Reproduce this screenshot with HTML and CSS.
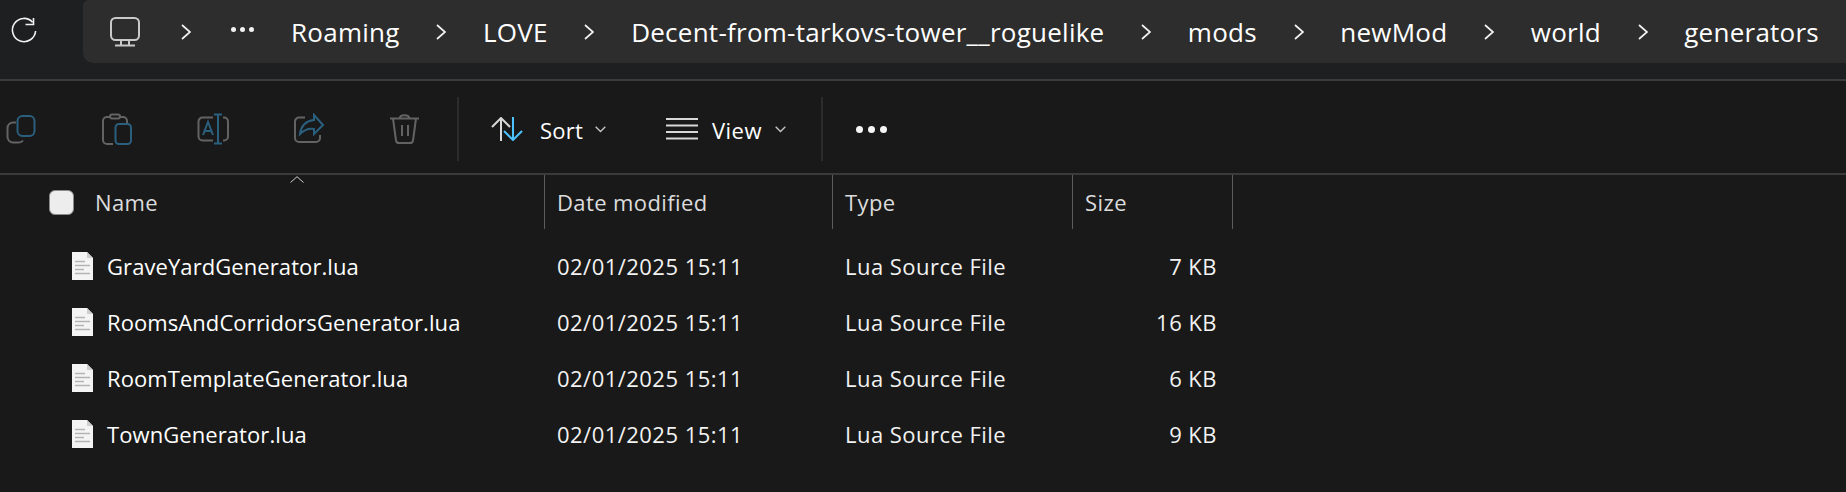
FILE: index.html
```html
<!DOCTYPE html>
<html>
	<head>
		<meta charset="UTF-8">
		<title>generators</title>
		<link rel="stylesheet" href="styles.css">
	</head>
	<body>
		<div class="topbar">
			<svg class="refresh" width="28" height="28" viewBox="0 0 28 28"><path d="M22.6 5.2A11.6 11.6 0 1 0 25.6 14" /><path d="M23.5 1v6.5H15.5" /></svg>
			<div class="crumbs">
				<svg class="monitor" width="30" height="30" viewBox="0 0 30 30"><rect x="1" y="1" width="28" height="22" rx="4.5" /><path d="M11 23v5M19 23v5M5 28.5h20" /></svg>
				<span class="chev"><svg width="10" height="16" viewBox="0 0 10 16"><path d="M1 1l8 7-8 7" /></svg></span>
				<span class="more"><i></i><i></i><i></i></span>
				<span class="crumb">Roaming</span>
				<span class="chev"><svg width="10" height="16" viewBox="0 0 10 16"><path d="M1 1l8 7-8 7" /></svg></span>
				<span class="crumb">LOVE</span>
				<span class="chev"><svg width="10" height="16" viewBox="0 0 10 16"><path d="M1 1l8 7-8 7" /></svg></span>
				<span class="crumb">Decent-from-tarkovs-tower__roguelike</span>
				<span class="chev"><svg width="10" height="16" viewBox="0 0 10 16"><path d="M1 1l8 7-8 7" /></svg></span>
				<span class="crumb">mods</span>
				<span class="chev"><svg width="10" height="16" viewBox="0 0 10 16"><path d="M1 1l8 7-8 7" /></svg></span>
				<span class="crumb">newMod</span>
				<span class="chev"><svg width="10" height="16" viewBox="0 0 10 16"><path d="M1 1l8 7-8 7" /></svg></span>
				<span class="crumb">world</span>
				<span class="chev"><svg width="10" height="16" viewBox="0 0 10 16"><path d="M1 1l8 7-8 7" /></svg></span>
				<span class="crumb">generators</span>
			</div>
		</div>

		<div class="toolbar">
			<div class="actions">
				<div class="action">
					<svg width="32" height="32" viewBox="0 0 32 32"><path class="off" d="M11 9.500H8a5.500 5.500 0 0 0-5.500 5.500V24a5.500 5.500 0 0 0 5.500 5.500h6a5 5 0 0 0 4-2" /><rect class="blue" x="12.500" y="3" width="17" height="20" rx="5" /></svg>
				</div>
				<div class="action">
					<svg width="32" height="32" viewBox="0 0 32 32"><path class="off" d="M12 31H6a4 4 0 0 1-4-4V8a4 4 0 0 1 4-4h3M19 4h3a4 4 0 0 1 4 4v2" /><rect class="off" x="9" y="1.500" width="10" height="4" rx="2" /><rect class="blue" x="14.500" y="11" width="15.500" height="20" rx="3.500" /></svg>
				</div>
				<div class="action">
					<svg width="32" height="32" viewBox="0 0 32 32"><path class="off" d="M16 4.500H5.500a4 4 0 0 0-4 4v15a4 4 0 0 0 4 4H16M26 4.500h1a4 4 0 0 1 4 4v15a4 4 0 0 1-4 4h-1" /><path class="blue" d="M21 2v28M17 1.500h8M17 30.500h8M6 22l5-13 5 13M7.700 18h6.600" /></svg>
				</div>
				<div class="action">
					<svg width="32" height="32" viewBox="0 0 32 32"><path class="off" d="M12 4.500H6a4 4 0 0 0-4 4V25a4 4 0 0 0 4 4h17a4 4 0 0 0 4-4v-3" /><path class="blue" d="M21 2l9 10-9 9v-5c-6-1-10 1-14 5 1-8 6-13 14-14z" /></svg>
				</div>
				<div class="action">
					<svg width="32" height="32" viewBox="0 0 32 32"><path class="off" d="M1 5.500h29M10.500 5.500C11 1 20 1 20.500 5.500M4 5.500l3 22a3 3 0 0 0 3 2.500h11a3 3 0 0 0 3-2.500l3-22M13 12v11M19 12v11" /></svg>
				</div>
			</div>
			<div class="sep"></div>
			<div class="tool tool-sort">
				<svg class="tool-icon" width="32" height="24" viewBox="0 0 32 24"><path class="up" d="M10 24V1M1 10l9-9 9 9" /><path class="down" d="M22 0v23M13 14l9 9 9-9" /></svg>
				<span class="tool-label">Sort</span>
				<svg class="caret" width="11" height="7" viewBox="0 0 11 7"><path d="M.7.700l4.800 4.800L10.300.700" /></svg>
			</div>
			<div class="tool tool-view">
				<svg class="tool-icon" width="32" height="22" viewBox="0 0 32 22"><path class="up" d="M0 1h32M0 7.500h32M0 14h32M0 20.500h32" /></svg>
				<span class="tool-label">View</span>
				<svg class="caret" width="11" height="7" viewBox="0 0 11 7"><path d="M.7.700l4.800 4.800L10.300.700" /></svg>
			</div>
			<div class="sep"></div>
			<div class="dots"><i></i><i></i><i></i></div>
		</div>

		<div class="list">
			<div class="row head">
				<div class="cell-name">
					<span class="check"></span>
					<span>Name</span>
					<svg class="sort-mark" width="14" height="7" viewBox="0 0 14 7"><path d="M.5 6.500L7 .7l6.500 5.800" /></svg>
				</div>
				<div class="cell">Date modified</div>
				<div class="cell">Type</div>
				<div class="cell">Size</div>
			</div>

			<div class="row file">
				<div class="cell-file"><svg class="doc" width="21" height="28" viewBox="0 0 21 28"><path class="page" d="M0 0h15l6 6v22H0z" /><path class="fold" d="M15 0l6 6h-6z" /><path class="lines" d="M3 9.500h10M3 13.500h15M3 17.500h9M3 21.500h15" /></svg>GraveYardGenerator.lua</div>
				<div class="cell">02/01/2025 15:11</div>
				<div class="cell">Lua Source File</div>
				<div class="cell size">7 KB</div>
			</div>
			<div class="row file">
				<div class="cell-file"><svg class="doc" width="21" height="28" viewBox="0 0 21 28"><path class="page" d="M0 0h15l6 6v22H0z" /><path class="fold" d="M15 0l6 6h-6z" /><path class="lines" d="M3 9.500h10M3 13.500h15M3 17.500h9M3 21.500h15" /></svg>RoomsAndCorridorsGenerator.lua</div>
				<div class="cell">02/01/2025 15:11</div>
				<div class="cell">Lua Source File</div>
				<div class="cell size">16 KB</div>
			</div>
			<div class="row file">
				<div class="cell-file"><svg class="doc" width="21" height="28" viewBox="0 0 21 28"><path class="page" d="M0 0h15l6 6v22H0z" /><path class="fold" d="M15 0l6 6h-6z" /><path class="lines" d="M3 9.500h10M3 13.500h15M3 17.500h9M3 21.500h15" /></svg>RoomTemplateGenerator.lua</div>
				<div class="cell">02/01/2025 15:11</div>
				<div class="cell">Lua Source File</div>
				<div class="cell size">6 KB</div>
			</div>
			<div class="row file">
				<div class="cell-file"><svg class="doc" width="21" height="28" viewBox="0 0 21 28"><path class="page" d="M0 0h15l6 6v22H0z" /><path class="fold" d="M15 0l6 6h-6z" /><path class="lines" d="M3 9.500h10M3 13.500h15M3 17.500h9M3 21.500h15" /></svg>TownGenerator.lua</div>
				<div class="cell">02/01/2025 15:11</div>
				<div class="cell">Lua Source File</div>
				<div class="cell size">9 KB</div>
			</div>
		</div>
	</body>
</html>
```

FILE: styles.css
```css
* {margin: 0; padding: 0; box-sizing: border-box;}
html, body {height: 100%; overflow: hidden;}
body {
	background: #191919;
	color: #fff;
	font-family: "Open Sans", "Noto Sans", sans-serif;
}
svg {display: block; fill: none;}

/* address bar */
.topbar {
	height: 81px;
	background: #1e1f20;
	border-bottom: 2px solid #3b3b3b;
	display: flex;
	align-items: flex-start;
	padding-left: 10px;
}
.refresh {
	margin-top: 17px;
	stroke: #f2f2f2;
	stroke-width: 1.6;
}
.crumbs {
	flex: 1;
	height: 63px;
	margin-left: 45px;
	padding-left: 27px;
	background: #2d2d2d;
	border-radius: 6px 0 0 10px;
	display: flex;
	align-items: center;
	gap: 36.700px;
	white-space: nowrap;
}
.monitor {
	stroke: #c9c9c9;
	stroke-width: 2;
	margin-right: 4px;
}
.chev svg {
	stroke: #f2f2f2;
	stroke-width: 1.7;
}
.more {
	display: flex;
	gap: 4px;
	margin: 0 0 5px 4px;
}
.more i {
	width: 5px;
	height: 5px;
	border-radius: 50%;
	background: #f2f2f2;
}
.crumb {
	font-size: 26px;
	letter-spacing: 0.25px;
	line-height: 30px;
}

/* command bar */
.toolbar {
	height: 94px;
	padding-top: 4px;
	border-bottom: 2px solid #3b3b3b;
	display: flex;
	align-items: center;
}
.actions {
	display: flex;
	margin-left: -27px;
}
.action {
	width: 96px;
	display: flex;
	justify-content: center;
}
.off {
	stroke: #636363;
	stroke-width: 2;
}
.blue {
	stroke: #2b5f7e;
	stroke-width: 2;
}
.sep {
	width: 2px;
	height: 64px;
	background: #2c2c2c;
	margin-left: 4px;
}
.tool {
	display: flex;
	align-items: center;
}
.tool-sort {margin-left: 32px;}
.tool-view {margin-left: 60px;}
.tool-view + .sep {margin-left: 35px;}
.tool-label {
	font-size: 22px;
	letter-spacing: 0.2px;
	margin-left: 17px;
	line-height: 30px;
	padding-top: 2px;
}
.tool-view .tool-label {
	margin-left: 14px;
	letter-spacing: 0.5px;
}
.caret {
	stroke: #c4c4c4;
	stroke-width: 1.4;
	margin-left: 12px;
}
.tool-view .caret {margin-left: 13px;}
.up {
	stroke: #d8d8d8;
	stroke-width: 2;
}
.down {
	stroke: #4cc2ff;
	stroke-width: 2;
}
.dots {
	display: flex;
	gap: 5px;
	margin-left: 33px;
}
.dots i {
	width: 7px;
	height: 7px;
	border-radius: 50%;
	background: #f5f5f5;
}

/* details list */
.list {font-size: 22px;}
.row {
	display: grid;
	grid-template-columns: 544px 288px 240px 161px;
	width: 1233px;
	align-items: center;
}
.head {
	height: 52px;
	color: #dcdcdc;
	align-items: stretch;
	letter-spacing: 0.4px;
}
.head .cell {
	border-left: 1px solid #5c5c5c;
	line-height: 54px;
	padding-left: 12px;
}
.head .cell:last-child {border-right: 1px solid #5c5c5c;}
.cell-name {
	position: relative;
	display: flex;
	align-items: center;
	padding-left: 49px;
	gap: 21px;
}
.check {
	width: 25px;
	height: 25px;
	border-radius: 6px;
	background: #ededed;
	border: 1px solid #8a8a8a;
}
/* little caret sits over the header, above the Name text */
.sort-mark {
	position: absolute;
	left: 290px;
	top: 1px;
	stroke: #cfcfcf;
	stroke-width: 1;
}
.file {
	height: 56px;
	color: #f2f2f2;
	letter-spacing: 0.47px;
}
.list .head + .file {margin-top: 11px;}
.file .cell {padding-left: 13px;}
.cell-file {
	display: flex;
	align-items: center;
	padding-left: 72px;
	gap: 14px;
	color: #fff;
	letter-spacing: 0.08px;
}
.size {
	text-align: right;
	padding-right: 16px;
}
.doc .page {fill: #f4f4f4;}
.doc .fold {fill: #cfcfcf;}
.doc .lines {
	stroke: #b4b4b4;
	stroke-width: 1.6;
}
```
